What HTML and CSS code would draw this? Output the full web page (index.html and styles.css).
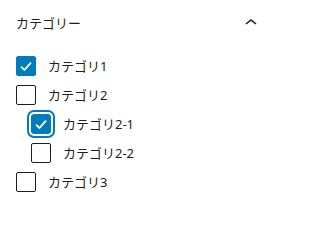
FILE: index.html
```html
<!DOCTYPE html>
<html lang="ja">
<head>
<meta charset="utf-8">
<link rel="stylesheet" href="styles.css">
</head>
<body>
<div class="panel">
  <div class="header">
    <span class="title">カテゴリー</span>
    <svg class="chevron" width="24" height="24" viewBox="0 0 24 24"><path d="M6.5 12.4L12 8l5.5 4.4-.9 1.2L12 10l-4.6 3.6-.9-1.2z"/></svg>
  </div>
  <div class="list">
    <label class="choice">
      <span class="box checked"><svg viewBox="0 0 20 20" width="20" height="20"><path d="M5 10.6l3.4 3.4 6.6-7.4" fill="none" stroke="#fff" stroke-width="1.8"/></svg></span>
      <span class="label">カテゴリ1</span>
    </label>
    <label class="choice">
      <span class="box"></span>
      <span class="label">カテゴリ2</span>
    </label>
    <div class="sub">
      <label class="choice">
        <span class="box checked focus"><svg viewBox="0 0 20 20" width="20" height="20"><path d="M5 10.6l3.4 3.4 6.6-7.4" fill="none" stroke="#fff" stroke-width="1.8"/></svg></span>
        <span class="label">カテゴリ2-1</span>
      </label>
      <label class="choice">
        <span class="box"></span>
        <span class="label">カテゴリ2-2</span>
      </label>
    </div>
    <label class="choice">
      <span class="box"></span>
      <span class="label">カテゴリ3</span>
    </label>
  </div>
</div>
</body>
</html>
```
FILE: styles.css
```css
html, body {
  margin: 0;
  padding: 0;
  background: #fff;
}
body {
  font-family: "Noto Sans", "Noto Sans CJK JP", sans-serif;
  font-size: 13px;
  color: #1e1e1e;
}
.panel {
  width: 277px;
}
.header {
  height: 46px;
  display: flex;
  align-items: center;
  justify-content: space-between;
  padding: 0 14px 0 16px;
}
.title {
  font-size: 13px;
  line-height: 20px;
}
.chevron {
  fill: #1e1e1e;
  display: block;
}
.list {
  margin-top: 10px;
  padding-left: 16px;
  display: flex;
  flex-direction: column;
  gap: 9px;
}
.sub {
  display: flex;
  flex-direction: column;
  gap: 9px;
  padding-left: 15px;
}
.choice {
  display: flex;
  align-items: center;
  gap: 12px;
  height: 20px;
}
.box {
  box-sizing: border-box;
  width: 20px;
  height: 20px;
  border: 1px solid #1e1e1e;
  border-radius: 2px;
  background: #fff;
  display: block;
  flex: none;
}
.box svg {
  display: block;
  margin: -1px;
}
.box.checked {
  background: #007cba;
  border-color: #007cba;
}
.box.focus {
  box-shadow: 0 0 0 2px #fff, 0 0 0 4px #007cba;
  border-radius: 3px;
}
.label {
  line-height: 20px;
}
```
